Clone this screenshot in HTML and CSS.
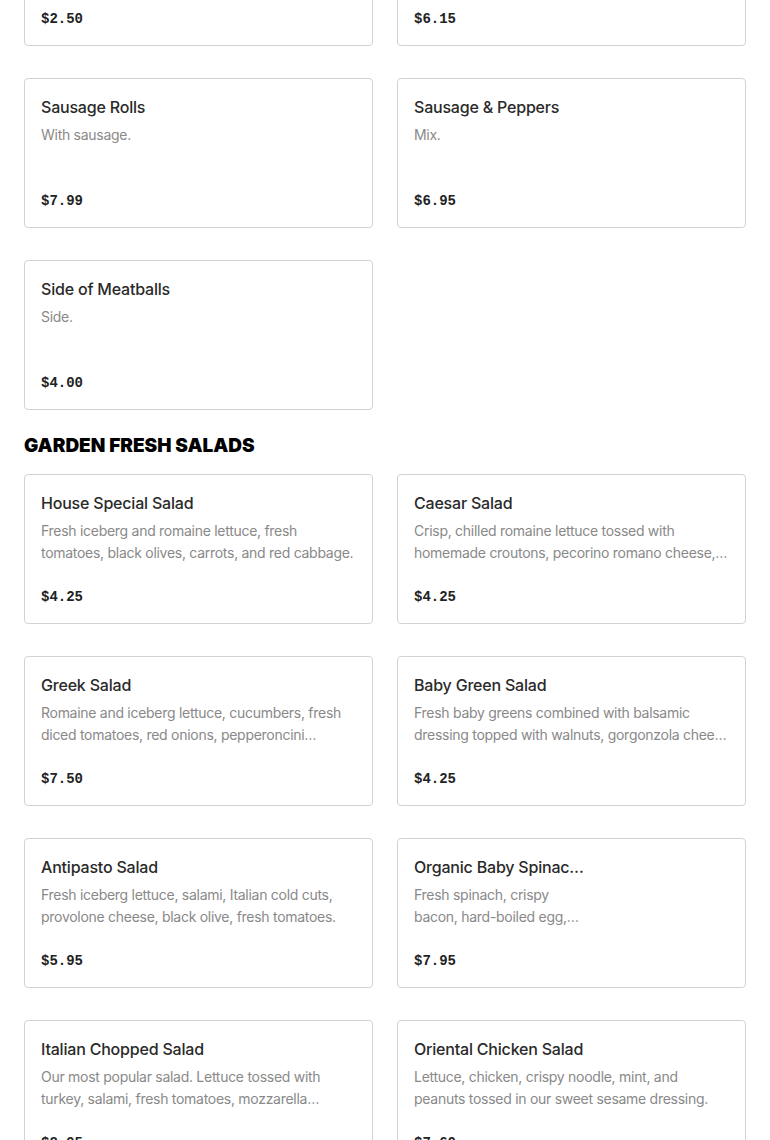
FILE: index.html
```html
<!DOCTYPE html>
<html lang="en">
<head>
<meta charset="utf-8">
<title>Menu</title>
<link rel="stylesheet" href="styles.css">
</head>
<body>
<main class="menu">
  <section class="section section--first">
    <div class="grid">
      <article class="card">
        <h3 class="card__title">Garlic Bread</h3>
        <p class="card__desc">Fresh baked.</p>
        <p class="card__price">$2.50</p>
      </article>
      <article class="card">
        <h3 class="card__title">Mozzarella Sticks</h3>
        <p class="card__desc">With marinara sauce.</p>
        <p class="card__price">$6.15</p>
      </article>
      <article class="card">
        <h3 class="card__title">Sausage Rolls</h3>
        <p class="card__desc">With sausage.</p>
        <p class="card__price">$7.99</p>
      </article>
      <article class="card">
        <h3 class="card__title">Sausage &amp; Peppers</h3>
        <p class="card__desc">Mix.</p>
        <p class="card__price">$6.95</p>
      </article>
      <article class="card">
        <h3 class="card__title">Side of Meatballs</h3>
        <p class="card__desc">Side.</p>
        <p class="card__price">$4.00</p>
      </article>
    </div>
  </section>

  <section class="section">
    <h2 class="section__title">GARDEN FRESH SALADS</h2>
    <div class="grid">
      <article class="card">
        <h3 class="card__title">House Special Salad</h3>
        <p class="card__desc">Fresh iceberg and romaine lettuce, fresh tomatoes, black olives, carrots, and red cabbage.</p>
        <p class="card__price">$4.25</p>
      </article>
      <article class="card">
        <h3 class="card__title">Caesar Salad</h3>
        <p class="card__desc">Crisp, chilled romaine lettuce tossed with homemade croutons, pecorino romano cheese, and our creamy Caesar dressing.</p>
        <p class="card__price">$4.25</p>
      </article>
      <article class="card">
        <h3 class="card__title">Greek Salad</h3>
        <p class="card__desc">Romaine and iceberg lettuce, cucumbers, fresh diced tomatoes, red onions, pepperoncini peppers, kalamata olives and feta cheese.</p>
        <p class="card__price">$7.50</p>
      </article>
      <article class="card">
        <h3 class="card__title">Baby Green Salad</h3>
        <p class="card__desc">Fresh baby greens combined with balsamic dressing topped with walnuts, gorgonzola cheese and dried cranberries.</p>
        <p class="card__price">$4.25</p>
      </article>
      <article class="card">
        <h3 class="card__title">Antipasto Salad</h3>
        <p class="card__desc">Fresh iceberg lettuce, salami, Italian cold cuts, provolone cheese, black olive, fresh tomatoes.</p>
        <p class="card__price">$5.95</p>
      </article>
      <article class="card card--narrow">
        <h3 class="card__title">Organic Baby Spinach Salad</h3>
        <p class="card__desc">Fresh spinach, crispy bacon, hard-boiled egg, mushrooms and red onions.</p>
        <p class="card__price">$7.95</p>
      </article>
      <article class="card">
        <h3 class="card__title">Italian Chopped Salad</h3>
        <p class="card__desc">Our most popular salad. Lettuce tossed with turkey, salami, fresh tomatoes, mozzarella cheeses, chickpeas and red onions.</p>
        <p class="card__price">$8.95</p>
      </article>
      <article class="card">
        <h3 class="card__title">Oriental Chicken Salad</h3>
        <p class="card__desc">Lettuce, chicken, crispy noodle, mint, and peanuts tossed in our sweet sesame dressing.</p>
        <p class="card__price">$7.60</p>
      </article>
    </div>
  </section>
</main>
</body>
</html>
```

FILE: styles.css
```css
* {
  box-sizing: border-box;
}

html, body {
  margin: 0;
  padding: 0;
  background: #ffffff;
}

body {
  font-family: Inter, "Liberation Sans", Arial, sans-serif;
  color: #2a2a2a;
  overflow: hidden;
}

.menu {
  padding: 0 24px;
  margin-top: -104px;
}

.section + .section {
  margin-top: 22px;
}

.section__title {
  margin: 0 0 14px;
  font-family: Inter, "Liberation Sans", Arial, sans-serif;
  font-weight: 900;
  font-size: 19px;
  line-height: 28px;
  letter-spacing: 0;
  color: #000;
}

.grid {
  display: grid;
  grid-template-columns: 1fr 1fr;
  column-gap: 24px;
  row-gap: 32px;
}

.card {
  height: 150px;
  border: 1px solid #d2d2d2;
  border-radius: 4px;
  padding: 17px 14px 16px 16px;
  display: flex;
  flex-direction: column;
  background: #fff;
}

.card__title {
  margin: 0 0 6px;
  font-size: 16px;
  line-height: 22px;
  font-weight: 500;
  color: #2a2a2a;
  white-space: nowrap;
  overflow: hidden;
  text-overflow: ellipsis;
  letter-spacing: -0.2px;
}

.card__desc {
  margin: 0;
  font-size: 14px;
  line-height: 22px;
  color: #898989;
  display: -webkit-box;
  -webkit-box-orient: vertical;
  -webkit-line-clamp: 2;
  overflow: hidden;
  letter-spacing: -0.28px;
}

.card__price {
  margin: auto 0 0;
  font-family: "Liberation Mono", "DejaVu Sans Mono", monospace;
  font-weight: 700;
  font-size: 14px;
  line-height: 20px;
  color: #222;
}

.card--narrow .card__title,
.card--narrow .card__desc {
  max-width: 170px;
}
```
